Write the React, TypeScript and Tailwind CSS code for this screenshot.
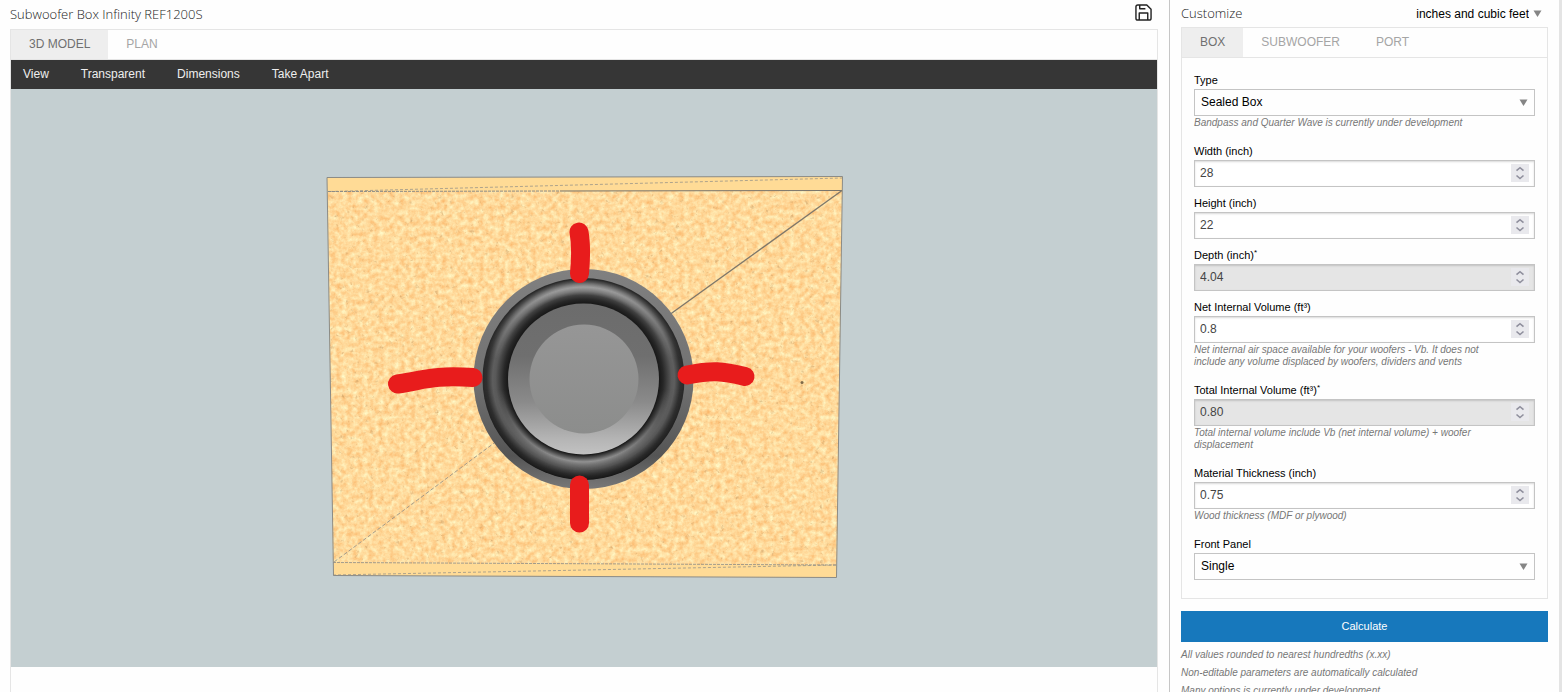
import { useState } from "react";
import type { ReactNode } from "react";

const Arrow = () => (
  <svg width="9" height="7" viewBox="0 0 9 7" className="pointer-events-none shrink-0" aria-hidden="true">
    <path d="M0.5 0.5h8L4.5 7z" fill="#858585" />
  </svg>
);

const SaveIcon = () => (
  <svg width="17" height="17" viewBox="0 0 18 18" fill="none" stroke="#222" strokeWidth="1.5" strokeLinejoin="round" aria-hidden="true">
    <path d="M3 1h9.5L17 5.5V15a2 2 0 0 1-2 2H3a2 2 0 0 1-2-2V3a2 2 0 0 1 2-2z" />
    <path d="M5 1v4h6M4.5 17V9.5h9V17" />
  </svg>
);

type TabsProps = { items: string[]; active: string; onSelect: (name: string) => void };

const Tabs = ({ items, active, onSelect }: TabsProps) => (
  <div role="tablist" className="flex h-[30px] border-b border-[#e5e5e5]">
    {items.map((name) => (
      <button
        key={name}
        type="button"
        role="tab"
        aria-selected={name === active}
        onClick={() => onSelect(name)}
        className={
          name === active
            ? "bg-[#eeeeee] px-[18px] pb-0.5 text-xs text-[#707070]"
            : "px-[18px] pb-0.5 text-xs text-[#a5a5a5]"
        }
      >
        {name}
      </button>
    ))}
  </div>
);

type FieldProps = { id: string; label: string; auto?: boolean; hint?: string; children: ReactNode };

const Field = ({ id, label, auto, hint, children }: FieldProps) => (
  <div className="mb-[9px]">
    <label htmlFor={id} className="block h-4 text-[11px] leading-[14px] text-black">
      {label}
      {auto && <sup className="text-[8px] leading-none">*</sup>}
    </label>
    {children}
    {hint && <p className="mt-px mb-[15px] pr-10 text-[10px] leading-3 text-[#777] italic">{hint}</p>}
  </div>
);

const SelectField = ({ id, label, options, hint }: { id: string; label: string; options: string[]; hint?: string }) => (
  <Field id={id} label={label} hint={hint}>
    <div className="relative flex h-[27px] items-center border border-[#c4c4c4]">
      <select id={id} className="h-full w-full appearance-none bg-transparent px-1.5 pb-0.5 text-xs text-black outline-none">
        {options.map((option) => (
          <option key={option}>{option}</option>
        ))}
      </select>
      <span className="pointer-events-none absolute right-1.5">
        <Arrow />
      </span>
    </div>
  </Field>
);

type NumberProps = { id: string; label: string; value: string; computed?: boolean; hint?: string };

const NumberField = ({ id, label, value, computed, hint }: NumberProps) => (
  <Field id={id} label={label} auto={computed} hint={hint}>
    <div
      className={
        computed
          ? "flex h-[27px] items-center border border-[#c4c4c4] bg-[#e5e5e5] pr-[5px] pb-px shadow-[inset_0_1px_2px_rgba(0,0,0,0.15)]"
          : "flex h-[27px] items-center border border-[#c4c4c4] bg-white pr-[5px] pb-px shadow-[inset_0_1px_2px_rgba(0,0,0,0.15)]"
      }
    >
      <input
        id={id}
        type="number"
        step="any"
        defaultValue={value}
        readOnly={computed}
        className="h-full min-w-0 flex-1 appearance-none bg-transparent px-[5px] text-xs text-[#444] outline-none [-moz-appearance:textfield] [&::-webkit-inner-spin-button]:appearance-none"
      />
      <svg width="18" height="18" viewBox="0 0 18 18" className="bg-[#e9e9ed]" fill="none" stroke="#8f8f9d" strokeWidth="1.6" aria-hidden="true">
        <path d="M5.5 6.7 9 3.7 12.5 6.7M5.5 11.5 9 14.5l3.5-3" />
      </svg>
    </div>
  </Field>
);

const edge = "#8b8b86";

const BoxModel = () => (
  <svg viewBox="11 89 1146 578" className="block h-[578px] w-full" role="img" aria-label="Subwoofer box, front view">
    <defs>
      <filter id="grain" x="0" y="0" width="100%" height="100%" colorInterpolationFilters="sRGB">
        <feTurbulence type="fractalNoise" baseFrequency="0.19" numOctaves="3" seed="8" />
        <feColorMatrix values="0.04 0 0 0 0.98  0.3 0 0 0 0.705  0.42 0 0 0 0.4  0 0 0 0 1" />
        <feComposite in2="SourceGraphic" operator="in" />
      </filter>
      <filter id="specks" x="0" y="0" width="100%" height="100%" colorInterpolationFilters="sRGB">
        <feTurbulence type="fractalNoise" baseFrequency="0.2" numOctaves="3" seed="21" />
        <feColorMatrix values="0 0 0 0 0.78  0 0 0 0 0.61  0 0 0 0 0.39  2.4 0 0 0 -1.6" />
        <feComposite in2="SourceGraphic" operator="in" />
      </filter>
      <linearGradient id="basket" x1="0" y1="0" x2="0" y2="1">
        <stop offset="0" stopColor="#808080" />
        <stop offset="0.5" stopColor="#727272" />
        <stop offset="0.85" stopColor="#555" />
        <stop offset="1" stopColor="#787878" />
      </linearGradient>
      <radialGradient id="surround" gradientUnits="userSpaceOnUse" cx="583.5" cy="379" r="101">
        <stop offset="0.74" stopColor="#151515" />
        <stop offset="0.79" stopColor="#272727" />
        <stop offset="0.87" stopColor="#595959" />
        <stop offset="0.9" stopColor="#5e5e5e" />
        <stop offset="0.96" stopColor="#303030" />
        <stop offset="1" stopColor="#292929" />
      </radialGradient>
      <radialGradient id="shineTop" gradientUnits="userSpaceOnUse" cx="583.5" cy="379" r="101">
        <stop offset="0.83" stopColor="#bbb" stopOpacity="0" />
        <stop offset="0.91" stopColor="#bbb" stopOpacity="0.8" />
        <stop offset="0.99" stopColor="#bbb" stopOpacity="0" />
      </radialGradient>
      <radialGradient id="shineBottom" gradientUnits="userSpaceOnUse" cx="583.5" cy="379" r="101">
        <stop offset="0.75" stopColor="#bbb" stopOpacity="0" />
        <stop offset="0.82" stopColor="#bbb" stopOpacity="0.85" />
        <stop offset="0.91" stopColor="#333" stopOpacity="0.5" />
        <stop offset="1" stopColor="#111" stopOpacity="0.8" />
      </radialGradient>
      <linearGradient id="fadeTop" x1="0" y1="0" x2="0" y2="1">
        <stop offset="0" stopColor="#fff" />
        <stop offset="0.4" stopColor="#000" />
      </linearGradient>
      <linearGradient id="fadeBottom" x1="0" y1="0" x2="0" y2="1">
        <stop offset="0.55" stopColor="#000" />
        <stop offset="1" stopColor="#fff" />
      </linearGradient>
      <mask id="maskTop">
        <circle cx="583.5" cy="379" r="101" fill="url(#fadeTop)" />
      </mask>
      <mask id="maskBottom">
        <circle cx="583.5" cy="379" r="101" fill="url(#fadeBottom)" />
      </mask>
      <linearGradient id="cone" x1="0" y1="0" x2="0" y2="1">
        <stop offset="0" stopColor="#6c6c6c" />
        <stop offset="0.35" stopColor="#6f6f6f" />
        <stop offset="0.65" stopColor="#8a8a8a" />
        <stop offset="0.9" stopColor="#b5b5b5" />
        <stop offset="1" stopColor="#c2c2c2" />
      </linearGradient>
      <linearGradient id="cap" x1="0" y1="0" x2="0" y2="1">
        <stop offset="0" stopColor="#969696" />
        <stop offset="1" stopColor="#8c8d8c" />
      </linearGradient>
    </defs>

    <path d="M327 177.5 842.5 176.5 836.5 577.5 333.5 575.5z" fill="#ffdb96" />
    <path d="M328 191.5 842 190.5 837 565 333 563z" filter="url(#grain)" />
    <path d="M328 191.5 842 190.5 837 565 333 563z" filter="url(#specks)" />
    <circle cx="802" cy="382.5" r="1.5" fill="#7d6847" />
    <g stroke={edge} fill="none" strokeWidth="1">
      <path d="M327 177.5 842.5 176.5 836.5 577.5 333.5 575.5z" />
      <path d="M328 191.5 560 191" strokeDasharray="3 1" />
      <path d="M560 191 842 190.5" stroke="#77736b" />
      <path d="M330 191.5 842 178" strokeDasharray="3 2" strokeWidth="0.7" />
      <path d="M842 190.5 583 377" stroke="#7e776a" strokeWidth="1.3" />
      <path d="M583 377 334 562" strokeDasharray="4 2" strokeWidth="0.8" />
      <path d="M333 562.5 837 565" strokeDasharray="3 1" strokeWidth="0.8" />
      <path d="M333 575 837 565" strokeDasharray="3 2" strokeWidth="0.7" />
    </g>

    <circle cx="583.5" cy="379" r="110" fill="url(#basket)" />
    <circle cx="583.5" cy="379" r="101" fill="url(#surround)" />
    <circle cx="583.5" cy="379" r="101" fill="url(#shineTop)" mask="url(#maskTop)" />
    <circle cx="583.5" cy="379" r="101" fill="url(#shineBottom)" mask="url(#maskBottom)" />
    <circle cx="583.5" cy="379" r="75.5" fill="url(#cone)" />
    <circle cx="584" cy="379" r="54.5" fill="url(#cap)" />

    <g stroke="#e81c1c" strokeWidth="19" strokeLinecap="round" strokeLinejoin="round" fill="none">
      <path d="M579 232C581 243 581 257 579.5 273.5" />
      <path d="M579.5 485V523" />
      <path d="M397.5 384C425 380 432 375 473 377.5" />
      <path d="M687 375C713 370 722 371 745 376.5" />
    </g>
  </svg>
);

export default function App() {
  const [view, setView] = useState("3D MODEL");
  const [section, setSection] = useState("BOX");

  return (
    <div className="flex h-screen overflow-hidden bg-[#fefefe] font-['Liberation_Sans',Arial,sans-serif]">
      <main className="flex min-w-0 flex-1 flex-col pr-[11px] pl-2.5">
        <header className="flex h-[29px] shrink-0 items-center justify-between pr-1.5">
          <h1 className="font-['Open_Sans',sans-serif] text-[13px] font-light text-[#222]">Subwoofer Box Infinity REF1200S</h1>
          <button type="button" aria-label="Save" className="mb-1">
            <SaveIcon />
          </button>
        </header>
        <section className="flex-1 border border-b-0 border-[#e5e5e5]">
          <Tabs items={["3D MODEL", "PLAN"]} active={view} onSelect={setView} />
          <nav className="flex h-[29px] items-center gap-8 bg-[#363636] px-3 pb-0.5 text-xs text-[#eee]">
            <button type="button">View</button>
            <button type="button">Transparent</button>
            <button type="button">Dimensions</button>
            <button type="button">Take Apart</button>
          </nav>
          <div className="bg-[#c4cfd1]">
            <BoxModel />
          </div>
        </section>
      </main>

      <aside className="w-[393px] shrink-0 border-r-[3px] border-l border-r-[#e4e4e4] border-l-[#c6c6c6] px-[11px]">
        <header className="flex h-[27px] items-center justify-between pr-1.5">
          <h2 className="font-['Open_Sans',sans-serif] text-[13px] font-light text-[#222]">Customize</h2>
          <div className="flex items-center gap-1">
            <select aria-label="Units" className="field-sizing-content appearance-none bg-transparent text-xs text-black outline-none">
              <option>inches and cubic feet</option>
              <option>centimeters and liters</option>
            </select>
            <Arrow />
          </div>
        </header>
        <section className="border border-[#e5e5e5]">
          <Tabs items={["BOX", "SUBWOOFER", "PORT"]} active={section} onSelect={setSection} />
          <form className="px-3 pt-[15px] pb-[9px]">
            <SelectField id="type" label="Type" options={["Sealed Box", "Vented Box"]} hint="Bandpass and Quarter Wave is currently under development" />
            <NumberField id="width" label="Width (inch)" value="28" />
            <NumberField id="height" label="Height (inch)" value="22" />
            <NumberField id="depth" label="Depth (inch)" value="4.04" computed />
            <NumberField
              id="net"
              label="Net Internal Volume (ft³)"
              value="0.8"
              hint="Net internal air space available for your woofers - Vb. It does not include any volume displaced by woofers, dividers and vents"
            />
            <NumberField
              id="total"
              label="Total Internal Volume (ft³)"
              value="0.80"
              computed
              hint="Total internal volume include Vb (net internal volume) + woofer displacement"
            />
            <NumberField id="thickness" label="Material Thickness (inch)" value="0.75" hint="Wood thickness (MDF or plywood)" />
            <SelectField id="front" label="Front Panel" options={["Single", "Double"]} />
          </form>
        </section>
        <button type="button" className="mt-3 h-[31px] w-full bg-[#1778bc] text-[11px] text-white">
          Calculate
        </button>
        <div className="pt-1 text-[10px] leading-[18px] text-[#777] italic">
          <p>All values rounded to nearest hundredths (x.xx)</p>
          <p>Non-editable parameters are automatically calculated</p>
          <p>Many options is currently under development</p>
        </div>
      </aside>
    </div>
  );
}
